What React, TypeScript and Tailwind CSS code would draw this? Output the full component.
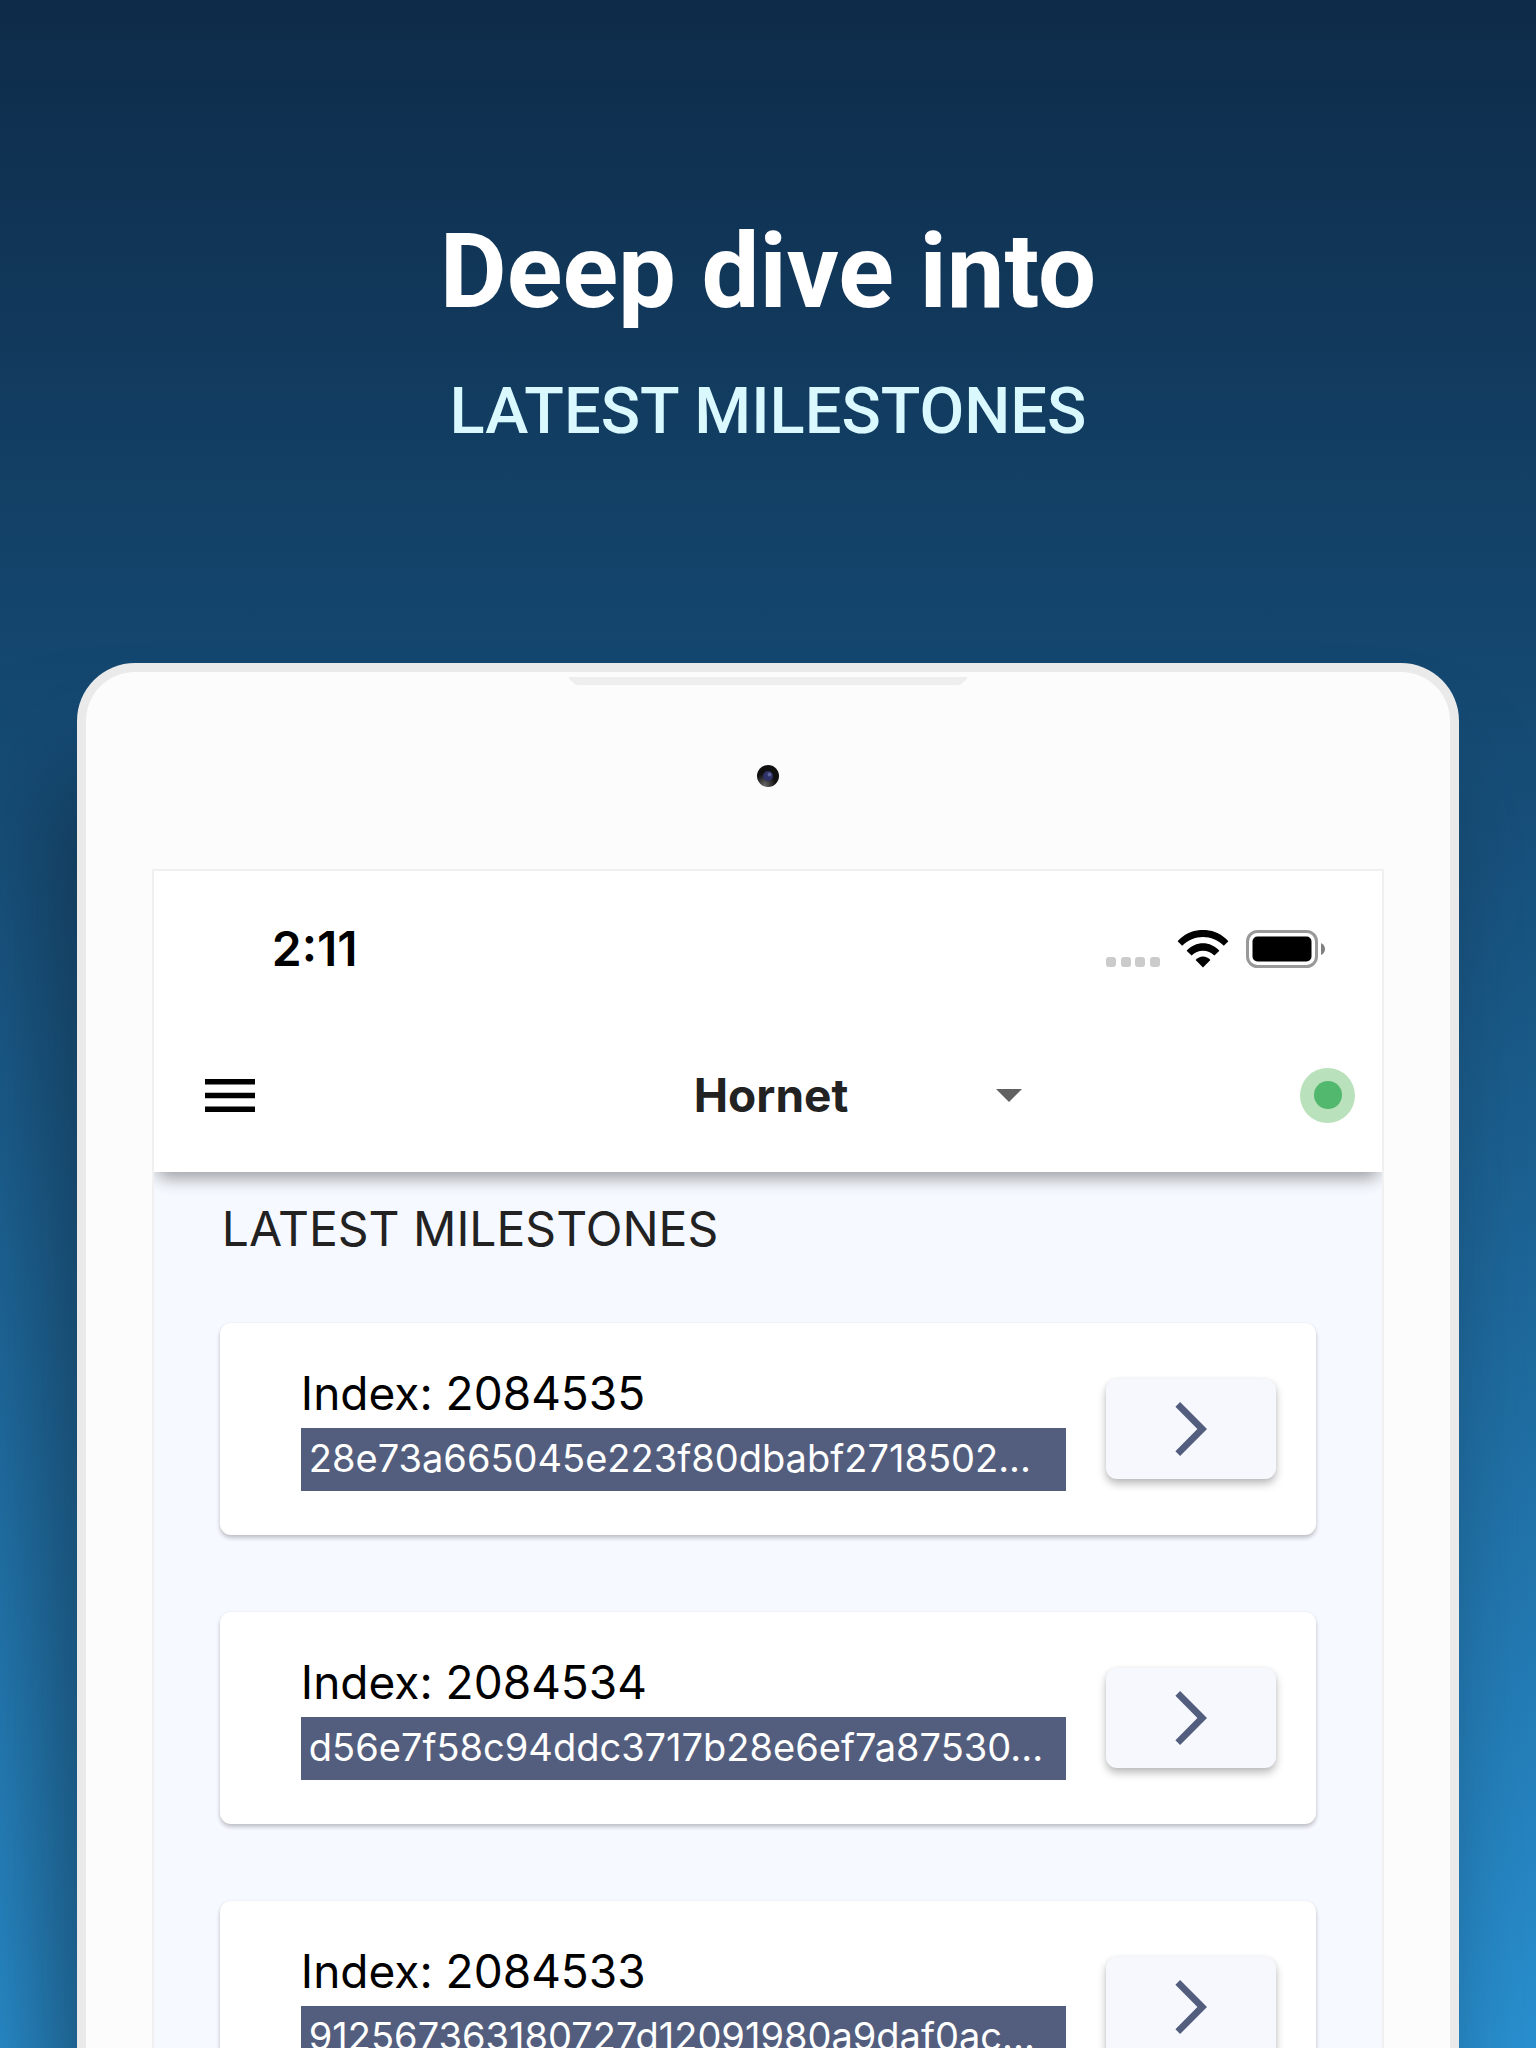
const milestones = [
  { index: 2084535, hash: "28e73a665045e223f80dbabf2718502..." },
  { index: 2084534, hash: "d56e7f58c94ddc3717b28e6ef7a87530..." },
  { index: 2084533, hash: "912567363180727d12091980a9daf0ac..." },
];

function StatusBar() {
  return (
    <div className="flex h-[116px] items-center justify-between pr-[56px] pl-[118px]">
      <span className="text-[48px] leading-[56px] font-semibold text-black">2:11</span>
      <div className="flex items-center">
        <svg className="mt-[26px] h-[10px] w-[54px]" viewBox="0 0 54 10" fill="#cbcbcb" aria-hidden="true">
          <rect x="0" width="10" height="10" rx="3" />
          <rect x="15" width="10" height="10" rx="3" />
          <rect x="29" width="10" height="10" rx="3" />
          <rect x="44" width="10" height="10" rx="3" />
        </svg>
        <svg className="ml-[17px] h-[38px] w-[52px]" viewBox="0 0 52 38" aria-hidden="true">
          <path d="M0.6 11.2C14.5-3.9 37.5-3.9 51.4 11.2L46.8 15.8C35.5 4.2 16.5 4.2 5.2 15.8Z" />
          <path d="M9.6 20.8C18.5 10.6 33.5 10.6 42.4 20.8L37.4 25.6C31.3 19 20.7 19 14.6 25.6Z" />
          <path d="M18.6 30C22.4 25.2 29.6 25.2 33.4 30L26 37.6Z" />
        </svg>
        <svg className="ml-[17px] h-[38px] w-[80px]" viewBox="0 0 80 38" aria-hidden="true">
          <rect x="1.5" y="1.5" width="69" height="35" rx="10" fill="none" stroke="#999" strokeWidth="3" />
          <rect x="6.5" y="6.5" width="59" height="25" rx="5" />
          <path d="M75 13Q79 15 79 19T75 25Z" fill="#808080" />
        </svg>
      </div>
    </div>
  );
}

function Toolbar() {
  return (
    <div className="grid grid-cols-[1fr_auto_1fr] items-center pr-[27px] pl-[51px]">
      <button type="button" aria-label="Open menu" className="w-[50px] justify-self-start">
        <svg viewBox="0 0 50 33" className="h-[33px] w-[50px]" aria-hidden="true">
          <path d="M0 0h50v5.5H0zM0 13.75h50v5.5H0zM0 27.5h50v5.5H0z" />
        </svg>
      </button>
      <div className="relative flex items-center">
        <select
          aria-label="Node"
          className="w-[484px] appearance-none bg-transparent pr-[18px] text-center text-[46px] leading-[56px] font-bold text-[#222]"
        >
          <option>Hornet</option>
        </select>
        <svg
          viewBox="0 0 26 13"
          className="pointer-events-none absolute right-0 h-[13px] w-[26px]"
          fill="#616161"
          aria-hidden="true"
        >
          <path d="M0 0h26L13 13z" />
        </svg>
      </div>
      <div
        role="status"
        aria-label="Node online"
        className="flex size-[55px] items-center justify-center justify-self-end rounded-full bg-[#b9e1bb]"
      >
        <span className="size-[28px] rounded-full bg-[#52b86e]" />
      </div>
    </div>
  );
}

function MilestoneCard({ index, hash }: { index: number; hash: string }) {
  return (
    <li className="flex h-[212px] shrink-0 items-center gap-10 rounded-[11px] bg-white pr-10 pl-[81px] shadow-[0_3px_4px_rgba(0,0,0,0.22),0_0_3px_rgba(0,0,0,0.05)]">
      <div className="min-w-0 flex-1 pb-[2px]">
        <p className="text-[46px] leading-[56px] text-black">Index: {index}</p>
        <p className="mt-[7px] bg-[#535e7e] px-2 pb-[3px] text-[38px] leading-[60px] whitespace-nowrap text-white">
          {hash}
        </p>
      </div>
      <button
        type="button"
        aria-label={`Open milestone ${index}`}
        className="flex h-[100px] w-[170px] shrink-0 items-center justify-center rounded-[11px] bg-[#f6f8fd] shadow-[0_5px_8px_rgba(0,0,0,0.26),0_0_4px_rgba(0,0,0,0.05)]"
      >
        <svg viewBox="0 0 32 54" className="h-[54px] w-8" fill="#535e7e" aria-hidden="true">
          <path d="M0.4 49.2L22.4 27 0.4 4.8 5.1 0 32 27 5.1 54z" />
        </svg>
      </button>
    </li>
  );
}

export default function App() {
  return (
    <main className="flex h-screen flex-col overflow-hidden bg-linear-to-b from-[#0e2b49] via-[#14476f] via-32% to-[#2990d0] font-['Inter',sans-serif]">
      <header className="flex flex-col items-center pt-[210px] text-center font-['Roboto',sans-serif]">
        <h1 className="text-[103px] leading-[124px] font-bold text-white">Deep dive into</h1>
        <p className="mt-[35px] text-[65px] leading-[84px] font-medium text-[#d9f9ff]">LATEST MILESTONES</p>
      </header>

      <section className="relative mx-[5%] mt-[210px] flex min-h-0 flex-1 flex-col rounded-t-[58px] border-x-[9px] border-t-[9px] border-[#eaeaea] bg-[#fcfcfc] px-[66px] shadow-[-32px_104px_104px_rgba(16,40,60,0.6)]">
        <div className="flex h-[197px] shrink-0 flex-col items-center pt-[5px]">
          <svg viewBox="0 0 400 8" className="h-2 w-[400px]" aria-hidden="true">
            <path d="M0 0h400q-4 6-9 8H9Q4 6 0 0z" fill="#eeeeee" />
          </svg>
          <svg viewBox="0 0 22 22" className="mt-20 size-[22px]" aria-hidden="true">
            <defs>
              <radialGradient id="lens-glow" cx="0.35" cy="0.9" r="0.5">
                <stop offset="0" stopColor="#666" />
                <stop offset="1" stopColor="#101010" />
              </radialGradient>
            </defs>
            <circle cx="11" cy="11" r="11" fill="url(#lens-glow)" />
            <circle cx="11" cy="11" r="5" fill="#2e3266" />
            <circle cx="12.5" cy="9.5" r="2" fill="#5f639c" />
          </svg>
        </div>

        <div className="flex min-h-0 flex-1 flex-col overflow-hidden border-x-2 border-t-2 border-[#f0f0f0] bg-[#f6f9ff]">
          <div className="z-10 flex h-[301px] shrink-0 flex-col bg-white pt-5 shadow-[0_12px_16px_-6px_rgba(0,0,0,0.28),0_4px_18px_rgba(0,0,0,0.14)]">
            <StatusBar />
            <div className="mt-[60px]">
              <Toolbar />
            </div>
          </div>
          <h2 className="mt-[27px] shrink-0 pl-[68px] text-[48px] leading-[60px] text-[#222]">LATEST MILESTONES</h2>
          <ul className="mt-16 flex flex-col gap-[77px] px-[66px]">
            {milestones.map((m) => (
              <MilestoneCard key={m.index} index={m.index} hash={m.hash} />
            ))}
          </ul>
        </div>
      </section>
    </main>
  );
}
